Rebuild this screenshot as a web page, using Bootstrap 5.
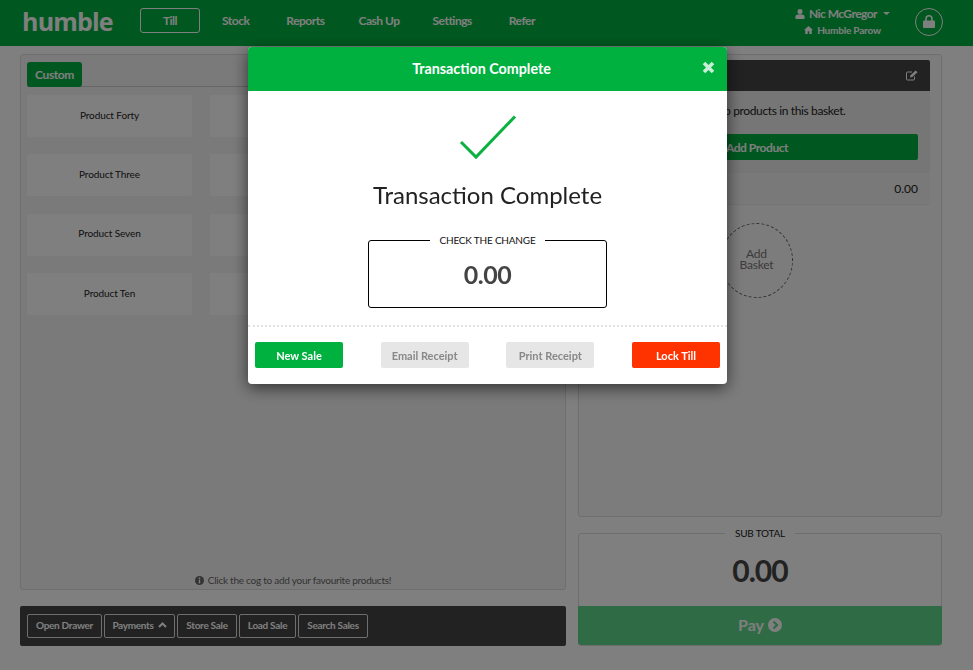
<!DOCTYPE html>
<html lang="en">
<head>
    <meta charset="UTF-8">
    <meta name="viewport" content="width=device-width, initial-scale=1.0">
    <title>Humble Till</title>
    <link href="https://cdn.jsdelivr.net/npm/bootstrap@5.3.0/dist/css/bootstrap.min.css" rel="stylesheet">
    <style>
        html, body {
            height: 670px;
            overflow: hidden;
        }

        body {
            background-color: #fff;
            font-family: "Lato", "Liberation Sans", sans-serif;
            color: #333;
            font-size: 12px;
        }

        .top-bar {
            height: 46px;
            background-color: #00b140;
            padding-left: 22px;
            padding-right: 30px;
        }

        .brand-name {
            font-family: "Open Sans", "Liberation Sans", sans-serif;
            font-size: 25px;
            font-weight: 700;
            letter-spacing: -.8px;
            color: #fff;
            width: 118px;
            line-height: 1;
            margin-bottom: 4px;
        }

        .top-link {
            color: #fff;
            font-size: 12px;
            font-weight: 700;
            letter-spacing: -.5px;
            text-decoration: none;
            text-align: center;
            line-height: 23px;
            margin-bottom: 6px;
        }

        .top-link.current {
            border: 1px solid #fff;
            border-radius: 3px;
            width: 60px;
            height: 25px;
            margin-right: 22px;
        }

        .link-stock { margin-right: 37px; }
        .link-reports { margin-right: 34px; }
        .link-cash { margin-right: 33px; }
        .link-settings { margin-right: 37px; }

        .user-box {
            color: #fff;
            font-weight: 700;
            text-align: center;
            margin-right: 25px;
            margin-bottom: 4px;
        }

        .user-name { font-size: 12px; line-height: 16px; letter-spacing: -.55px; }
        .user-shop { font-size: 10px; line-height: 14px; margin-top: 1px; letter-spacing: -.2px; }

        .caret-mark { margin-left: 2px; }

        .lock-ring {
            width: 28px;
            height: 28px;
            border: 1px solid #fff;
            border-radius: 50%;
            margin-bottom: 3px;
        }

        .page-body {
            padding: 8px 31px 0 20px;
            gap: 12px;
        }

        .left-col { width: 546px; }
        .right-col { width: 364px; }

        .product-panel {
            height: 536px;
            border: 1px solid #ddd;
            border-radius: 3px;
            padding: 7px 6px;
            background-color: #f5f5f5;
        }

        .tab-line {
            border-bottom: 1px solid #ccc;
            height: 25px;
            margin-bottom: 8px;
        }

        .custom-tab {
            width: 55px;
            height: 25px;
            background-color: #00b140;
            color: #fff;
            font-weight: 700;
            font-size: 12px;
            letter-spacing: -.4px;
            line-height: 25px;
            text-align: center;
            border-radius: 3px;
        }

        .product-grid {
            display: grid;
            grid-template-columns: repeat(3, 165px);
            column-gap: 18px;
            row-gap: 17.400px;
        }

        .product-tile {
            height: 42px;
            padding-bottom: 2px;
            background-color: #fff;
            border-radius: 2px;
            color: #222;
            font-size: 10px;
            letter-spacing: -.1px;
            display: flex;
            align-items: center;
            justify-content: center;
        }

        .panel-hint {
            font-size: 10px;
            letter-spacing: -.25px;
            color: #666;
            left: 0;
            right: 0;
            bottom: 1px;
        }

        .action-bar {
            margin-top: 16px;
            height: 40px;
            background-color: #444;
            border-radius: 2px;
            padding: 8px 7px;
            gap: 2px;
        }

        .bar-btn {
            height: 24px;
            padding: 0 0 3px;
            border: 1px solid #ddd;
            border-radius: 2px;
            color: #fff;
            background: transparent;
            font-size: 10px;
            font-weight: 700;
            letter-spacing: -.3px;
            line-height: 18px;
            text-align: center;
        }

        .basket-panel {
            height: 463px;
            border: 1px solid #ddd;
            border-radius: 3px;
            padding: 5px 11px 0 5px;
            background-color: #f9f9f9;
        }

        .basket-head {
            height: 31px;
            background-color: #444;
            color: #fff;
            padding-right: 12px;
            border-radius: 2px 2px 0 0;
        }

        .basket-body {
            height: 82px;
            background-color: #ececec;
            padding: 11px 12px 0 12px;
            font-size: 12px;
            letter-spacing: -.37px;
            line-height: 18px;
            text-align: center;
            color: #222;
        }

        .add-product {
            height: 26px;
            margin-top: 14px;
            background-color: #00b140;
            color: #fff;
            font-size: 12px;
            font-weight: 700;
            letter-spacing: -.45px;
            line-height: 28px;
            border-radius: 2px;
        }

        .basket-total {
            height: 32px;
            background-color: #f2f2f2;
            border-bottom: 1px solid #e8e8e8;
            border-radius: 0 0 2px 2px;
            padding-right: 12px;
            font-size: 12px;
            color: #222;
        }

        .add-basket {
            position: absolute;
            left: 141px;
            top: 168px;
            width: 73px;
            height: 75px;
            padding-bottom: 2px;
            border: 1px dashed #666;
            border-radius: 50%;
            font-size: 12px;
            line-height: 10.500px;
            color: #777;
            letter-spacing: -.2px;
        }

        .total-box {
            margin-top: 16px;
            height: 113px;
            border: 1px solid #ddd;
            border-radius: 3px;
        }

        .total-label {
            top: -7px;
            left: 0;
            right: 0;
            line-height: 13px;
            font-size: 10px;
            letter-spacing: -.2px;
            color: #222;
        }

        .total-label span {
            background-color: #fff;
            padding: 0 10px;
        }

        .total-value {
            height: 72px;
            font-size: 30px;
            font-weight: 700;
            letter-spacing: -1px;
            color: #444;
            padding-top: 1px;
        }

        .pay-bar {
            height: 39px;
            margin: 0 -1px -1px;
            padding-bottom: 2px;
            background-color: #5fd68b;
            color: #fff;
            font-size: 16px;
            font-weight: 700;
            border-radius: 0 0 3px 3px;
        }

        .done-dialog {
            position: fixed;
            left: 248px;
            top: 47px;
            width: 479px;
            height: 337px;
            background-color: #fff;
            border-radius: 4px;
            box-shadow: 0 4px 16px rgba(0, 0, 0, .6);
            z-index: 1060;
        }

        .done-head {
            height: 44px;
            background-color: #00b140;
            color: #fff;
            font-size: 14.300px;
            font-weight: 700;
            border-radius: 4px 4px 0 0;
            padding-left: 13px;
            padding-right: 12px;
        }

        .done-close {
            margin-bottom: 3px;
        }

        .done-title {
            font-size: 24px;
            line-height: 29px;
            color: #222;
            margin-top: 20px;
        }

        .tick-mark {
            margin-top: 24px;
        }

        .change-box {
            width: 239px;
            height: 68px;
            margin-top: 31px;
            padding-top: 1px;
            border: 1px solid #000;
            border-radius: 3px;
            font-size: 25px;
            font-weight: 700;
            letter-spacing: -.5px;
            color: #444;
        }

        .change-label {
            top: -7px;
            left: 0;
            right: 0;
            font-size: 10px;
            font-weight: 400;
            letter-spacing: -.2px;
            line-height: 13px;
            color: #111;
        }

        .change-label span {
            background-color: #fff;
            padding: 0 10px;
        }

        .done-foot {
            margin-top: 17px;
            border-top: 2px dotted #e2e2e2;
            padding: 15px 7px 0 7px;
        }

        .foot-btn {
            width: 88px;
            height: 26px;
            border-radius: 2px;
            font-size: 11px;
            font-weight: 700;
            line-height: 28px;
            text-align: center;
        }

        .foot-green { background-color: #00b140; color: #fff; }
        .foot-grey { background-color: #e6e6e6; color: #888; }
        .foot-red { background-color: #ff3300; color: #fff; }
    </style>
</head>

<body>
    <!-- page behind the dialog -->
    <nav class="top-bar d-flex align-items-center">
        <div class="brand-name">humble</div>
        <a class="top-link current" href="#">Till</a>
        <a class="top-link link-stock" href="#">Stock</a>
        <a class="top-link link-reports" href="#">Reports</a>
        <a class="top-link link-cash" href="#">Cash Up</a>
        <a class="top-link link-settings" href="#">Settings</a>
        <a class="top-link" href="#">Refer</a>
        <div class="user-box ms-auto">
            <div class="user-name d-flex align-items-center justify-content-center gap-1">
                <svg width="10" height="10" viewBox="0 0 10 10" fill="#fff"><circle cx="5" cy="2.600" r="2.500"/><path d="M0.500 10V7.600C0.500 6 2.500 5.300 5 5.300S9.500 6 9.500 7.600V10Z"/></svg>
                <span>Nic McGregor</span>
                <svg class="caret-mark" width="7" height="3" viewBox="0 0 7 3" fill="#fff"><path d="M0 0H7L3.500 3Z"/></svg>
            </div>
            <div class="user-shop d-flex align-items-center justify-content-center gap-1">
                <svg width="9" height="8" viewBox="0 0 9 8" fill="#fff"><path d="M4.500 0L9 4H7.800V8H5.300V5.200H3.700V8H1.200V4H0Z"/></svg>
                <span>Humble Parow</span>
            </div>
        </div>
        <div class="lock-ring d-flex align-items-center justify-content-center">
            <svg width="12" height="13" viewBox="0 0 12 13"><path d="M3 6V3.800a3 3 0 0 1 6 0V6" fill="none" stroke="#fff" stroke-width="1.600"/><rect y="5.500" width="12" height="7.500" rx="1" fill="#fff"/></svg>
        </div>
    </nav>

    <div class="page-body d-flex">
        <div class="left-col">
            <div class="product-panel position-relative">
                <div class="tab-line"><div class="custom-tab">Custom</div></div>
                <div class="product-grid">
                    <div class="product-tile">Product Forty</div>
                    <div class="product-tile">Product One</div>
                    <div class="product-tile">Product Two</div>
                    <div class="product-tile">Product Three</div>
                    <div class="product-tile">Product Four</div>
                    <div class="product-tile">Product Five</div>
                    <div class="product-tile">Product Seven</div>
                    <div class="product-tile">Product Eight</div>
                    <div class="product-tile">Product Nine</div>
                    <div class="product-tile">Product Ten</div>
                    <div class="product-tile">Product Eleven</div>
                    <div class="product-tile">Product Twelve</div>
                </div>
                <div class="panel-hint position-absolute d-flex align-items-center justify-content-center gap-1">
                    <svg width="9" height="9" viewBox="0 0 9 9"><circle cx="4.500" cy="4.500" r="4.500" fill="#666"/><rect x="3.800" y="3.600" width="1.400" height="3.800" fill="#fff"/><rect x="3.800" y="1.500" width="1.400" height="1.400" fill="#fff"/></svg>
                    <span>Click the cog to add your favourite products!</span>
                </div>
            </div>
            <div class="action-bar d-flex">
                <button class="bar-btn" style="width: 75px">Open Drawer</button>
                <button class="bar-btn d-flex align-items-center justify-content-center gap-1" style="width: 71px">Payments
                    <svg width="9" height="6" viewBox="0 0 9 6"><path d="M1 5L4.500 1.500L8 5" fill="none" stroke="#fff" stroke-width="2"/></svg>
                </button>
                <button class="bar-btn" style="width: 60px">Store Sale</button>
                <button class="bar-btn" style="width: 57px">Load Sale</button>
                <button class="bar-btn" style="width: 70px">Search Sales</button>
            </div>
        </div>

        <div class="right-col">
            <div class="basket-panel position-relative">
                <div class="basket-head d-flex align-items-center justify-content-end">
                    <svg width="12" height="11" viewBox="0 0 12 11"><path d="M8.500 6.500V9a1 1 0 0 1-1 1H1.500a1 1 0 0 1-1-1V3a1 1 0 0 1 1-1H6" fill="none" stroke="#fff"/><path d="M4 7.500L4.500 5.200L9.700 0.500L11.500 2.300L6.300 7Z" fill="#fff"/></svg>
                </div>
                <div class="basket-body">
                    <div>There are no products in this basket.</div>
                    <div class="add-product">Add Product</div>
                </div>
                <div class="basket-total d-flex align-items-center justify-content-between">
                    <span class="ps-3">Total</span><span>0.00</span>
                </div>
                <div class="add-basket d-flex align-items-center justify-content-center text-center">Add<br>Basket</div>
            </div>
            <div class="total-box position-relative d-flex flex-column">
                <div class="total-label position-absolute text-center"><span>SUB TOTAL</span></div>
                <div class="total-value d-flex align-items-center justify-content-center">0.00</div>
                <div class="pay-bar d-flex align-items-center justify-content-center gap-1">
                    Pay
                    <svg width="14" height="14" viewBox="0 0 14 14"><circle cx="7" cy="7" r="7" fill="#fff"/><path d="M5.500 3.500L9 7L5.500 10.500" fill="none" stroke="#5fd68b" stroke-width="2.200"/></svg>
                </div>
            </div>
        </div>
    </div>

    <div class="modal-backdrop show"></div>

    <div class="done-dialog">
        <div class="done-head position-relative d-flex align-items-center justify-content-between">
            <span class="flex-grow-1 text-center">Transaction Complete</span>
            <svg class="done-close" width="13" height="13" viewBox="0 0 13 13"><path d="M2 2L11 11M11 2L2 11" stroke="#c6efd4" stroke-width="3.600"/></svg>
        </div>
        <div class="d-flex flex-column align-items-center">
            <svg class="tick-mark" width="58" height="45" viewBox="0 0 58 45"><path d="M2 27L17 42L56 1.500" fill="none" stroke="#0bb141" stroke-width="3"/></svg>
            <div class="done-title">Transaction Complete</div>
            <div class="change-box position-relative d-flex align-items-center justify-content-center">
                <div class="change-label position-absolute text-center"><span>CHECK THE CHANGE</span></div>
                0.00
            </div>
        </div>
        <div class="done-foot d-flex justify-content-between">
            <div class="foot-btn foot-green">New Sale</div>
            <div class="foot-btn foot-grey">Email Receipt</div>
            <div class="foot-btn foot-grey">Print Receipt</div>
            <div class="foot-btn foot-red">Lock Till</div>
        </div>
    </div>

    <script src="https://cdn.jsdelivr.net/npm/bootstrap@5.3.0/dist/js/bootstrap.bundle.min.js"></script>
</body>
</html>
